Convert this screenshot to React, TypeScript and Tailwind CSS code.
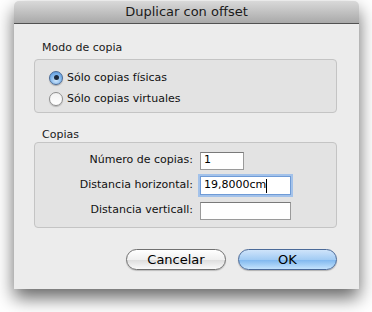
import React from 'react';

const font = { fontFamily: '"DejaVu Sans", "Lucida Grande", sans-serif' };

function Radio({ checked, label }: { checked: boolean; label: string }) {
  return (
    <div className="flex items-center h-[21px] pl-[14px] gap-[4px]">
      <span
        className={
          checked
            ? 'w-[14px] h-[14px] rounded-full border border-[#4a6a96] bg-[radial-gradient(circle_at_50%_70%,#cfe6fb_0%,#7fb4ea_55%,#4f8fd6_100%)] flex items-center justify-center shadow-[0_1px_1px_rgba(0,0,0,0.25)]'
            : 'w-[14px] h-[14px] rounded-full border border-[#8e8e8e] bg-[linear-gradient(#f2f2f2,#ffffff)] shadow-[0_1px_1px_rgba(0,0,0,0.2)]'
        }
      >
        {checked && <span className="w-[5px] h-[5px] rounded-full bg-[#1d2a3c]" />}
      </span>
      <span className="text-[11px] text-[#111] leading-none">{label}</span>
    </div>
  );
}

function Field({ label, value, width, focused }: { label: string; value?: string; width: number; focused?: boolean }) {
  return (
    <div className="flex items-center h-[25px]">
      <span className="w-[165px] text-right text-[11px] text-[#111] pr-[7px]">{label}</span>
      <div
        style={{ width }}
        className={
          focused
            ? 'h-[19px] bg-white border border-[#6f9bd6] shadow-[0_0_0_2px_#a3c2ea] flex items-center pl-[3px] text-[11px] text-black'
            : 'h-[18px] bg-white border border-[#9a9a9a] border-t-[#7a7a7a] flex items-center pl-[3px] text-[11px] text-black'
        }
      >
        {value}
        {focused && <span className="w-px h-[14px] bg-black" />}
      </div>
    </div>
  );
}

export default function App() {
  return (
    <div className="w-[372px] h-[312px] bg-white pl-[14px] pt-[1px]" style={font}>
      <div className="w-[345px] h-[288px] rounded-t-[5px] bg-[#ececec] shadow-[0_9px_18px_rgba(0,0,0,0.6)] flex flex-col">
        <div className="h-[23px] rounded-t-[5px] bg-[linear-gradient(#d9d9d9,#a9a9a9)] border-b border-[#515151] flex items-center justify-center">
          <span className="text-[13px] text-[#1a1a1a]">Duplicar con offset</span>
        </div>
        <div className="flex flex-col pl-[20px] pr-[8px]">
          <div className="mt-[17px] h-[14px] pl-[8px] text-[11px] text-[#1a1a1a] leading-[14px]">Modo de copia</div>
          <div className="mt-[4px] h-[54px] w-[303px] rounded-[4px] border border-[#c4c4c4] bg-[#e3e3e3] pt-[7px]">
            <Radio checked label="Sólo copias físicas" />
            <Radio checked={false} label="Sólo copias virtuales" />
          </div>
          <div className="mt-[15px] h-[14px] pl-[8px] text-[11px] text-[#1a1a1a] leading-[14px]">Copias</div>
          <div className="h-[86px] w-[303px] rounded-[4px] border border-[#c4c4c4] bg-[#e3e3e3] pt-[5px]">
            <Field label="Número de copias:" value="1" width={44} />
            <Field label="Distancia horizontal:" value="19,8000cm" width={91} focused />
            <Field label="Distancia verticall:" width={91} />
          </div>
          <div className="mt-[21px] flex justify-end gap-[12px] w-[303px]">
            <button className="w-[100px] h-[21px] rounded-full border border-[#707070] bg-[linear-gradient(#ffffff,#f0f0f0_50%,#dcdcdc_51%,#fafafa)] text-[13px] text-black leading-none shadow-[0_1px_1px_rgba(0,0,0,0.2)]">
              Cancelar
            </button>
            <button className="w-[99px] h-[21px] rounded-full border border-[#4b6a98] bg-[linear-gradient(#cfe4fa,#a3ccf4_50%,#7db6ee_51%,#c4e3fd)] text-[13px] text-black leading-none shadow-[0_1px_1px_rgba(0,0,0,0.25)]">
              OK
            </button>
          </div>
        </div>
      </div>
    </div>
  );
}
